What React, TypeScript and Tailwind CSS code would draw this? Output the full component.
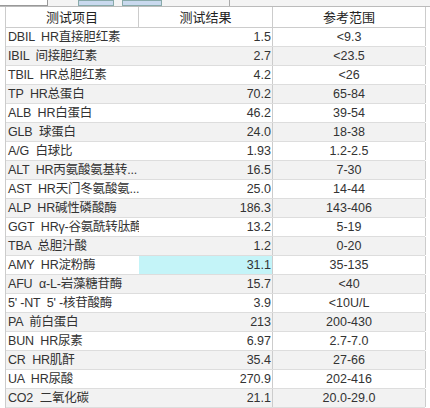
const rows: [string, string, string][] = [
  ['DBIL  HR直接胆红素', '1.5', '<9.3'],
  ['IBIL  间接胆红素', '2.7', '<23.5'],
  ['TBIL  HR总胆红素', '4.2', '<26'],
  ['TP  HR总蛋白', '70.2', '65-84'],
  ['ALB  HR白蛋白', '46.2', '39-54'],
  ['GLB  球蛋白', '24.0', '18-38'],
  ['A/G  白球比', '1.93', '1.2-2.5'],
  ['ALT  HR丙氨酸氨基转...', '16.5', '7-30'],
  ['AST  HR天门冬氨酸氨...', '25.0', '14-44'],
  ['ALP  HR碱性磷酸酶', '186.3', '143-406'],
  ['GGT  HRγ-谷氨酰转肽酶', '13.2', '5-19'],
  ['TBA  总胆汁酸', '1.2', '0-20'],
  ['AMY  HR淀粉酶', '31.1', '35-135'],
  ['AFU  α-L-岩藻糖苷酶', '15.7', '<40'],
  ["5' -NT  5' -核苷酸酶", '3.9', '<10U/L'],
  ['PA  前白蛋白', '213', '200-430'],
  ['BUN  HR尿素', '6.97', '2.7-7.0'],
  ['CR  HR肌酐', '35.4', '27-66'],
  ['UA  HR尿酸', '270.9', '202-416'],
  ['CO2  二氧化碳', '21.1', '20.0-29.0'],
];

export default function App() {
  return (
    <div className="w-[430px] h-[408px] overflow-hidden bg-white text-[12.5px] text-[#333]" style={{ fontFamily: '"Liberation Sans", "Noto Sans CJK SC", sans-serif' }}>
      <div className="h-[7px] flex bg-[#f4f4f4] border-b border-[#bbb]">
        <div className="w-[48px] border-r border-b border-[#999] bg-white" />
        <div className="ml-[30px] w-[36px] bg-[#c9d9ee] border border-[#8aa]" />
        <div className="ml-[8px] w-[40px] bg-[#c9d9ee] border border-[#8aa]" />
        <div className="ml-auto mr-[200px] w-px bg-[#aaa]" />
      </div>
      <div className="ml-[5px] w-[420px] border-l border-[#ccc]">
        <div className="grid grid-cols-[133px_134px_153px] h-[21px] items-center text-[13px] text-[#222] border-b border-[#ccc]">
          <div className="text-center border-r border-[#ccc] h-full leading-[21px]">测试项目</div>
          <div className="text-center border-r border-[#ccc] h-full leading-[21px]">测试结果</div>
          <div className="text-center border-r border-[#ccc] h-full leading-[21px]">参考范围</div>
        </div>
        {rows.map((r, i) => (
          <div key={i} className={`grid grid-cols-[133px_134px_153px] h-[19px] border-b border-[#ddd] ${i % 2 === 1 ? 'bg-[#f2f2f2]' : 'bg-white'}`}>
            <div className="pl-[2px] leading-[18px] whitespace-pre overflow-hidden tracking-[-0.2px]">{r[0]}</div>
            <div className={`text-right pr-[1px] leading-[18px] border-r border-[#ccc] ${i === 12 ? 'bg-[#c4f4f8]' : ''}`}>{r[1]}</div>
            <div className="text-center leading-[18px] border-r border-[#ccc]">{r[2]}</div>
          </div>
        ))}
      </div>
    </div>
  );
}
